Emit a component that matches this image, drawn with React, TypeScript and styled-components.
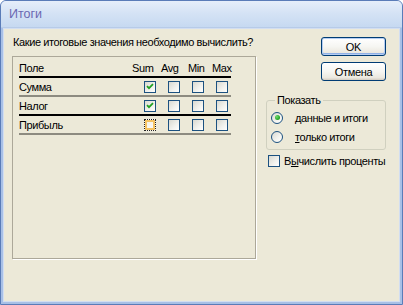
import React from "react";
import styled, { createGlobalStyle, css } from "styled-components";

const Global = createGlobalStyle`
  html, body { margin: 0; padding: 0; background: #fff; }
  body { font-family: "Liberation Sans", Arial, sans-serif; font-size: 11px; color: #000; letter-spacing: -0.4px; }
  * { box-sizing: border-box; }
`;

const Window = styled.div`
  width: 403px;
  height: 305px;
  display: flex;
  flex-direction: column;
  border: 1px solid #5a7cb8;
  border-radius: 6px 6px 0 0;
  background: #a8c0e6;
  overflow: hidden;
`;

const TitleBar = styled.div`
  height: 27px;
  flex: none;
  display: flex;
  align-items: center;
  padding-left: 8px;
  background: linear-gradient(#e6eefa 0%, #d5e3f5 45%, #c6d9f1 100%);
  border-bottom: 1px solid #b7cbe8;
  color: #6a68b2;
  font-size: 12.5px;
  letter-spacing: 0;
`;

const Client = styled.div`
  flex: 1;
  display: flex;
  gap: 10px;
  margin: 0 2px 2px 2px;
  border: 1px solid #d2def1;
  background: #ece9d8;
  padding: 6px 11px 0 8px;
`;

const LeftCol = styled.div`
  width: 244px;
  display: flex;
  flex-direction: column;
`;

const Prompt = styled.div`
  line-height: 14px;
  padding-left: 1px;
  white-space: nowrap;
`;

const ListFrame = styled.div`
  margin-top: 7px;
  height: 203px;
  border: 1px solid #aca899;
  box-shadow: 1px 1px 0 #fff;
  padding: 0 24px 0 6px;
  display: flex;
  flex-direction: column;
`;

const HeaderRow = styled.div`
  height: 21px;
  display: flex;
  align-items: flex-end;
  padding-bottom: 1px;
  border-bottom: 2px solid #000;
  line-height: 14px;
`;

const HeaderCell = styled.div<{ $w: number }>`
  width: ${(p) => p.$w}px;
  flex: none;
  white-space: nowrap;
`;

const Row = styled.div<{ $dark?: boolean }>`
  height: 19px;
  display: grid;
  grid-template-columns: 119px 24px 24px 24px 21px;
  align-items: center;
  border-bottom: 2px solid ${(p) => (p.$dark ? "#000" : "#8d8b80")};
  line-height: 14px;
`;

const NameCell = styled.div`
  white-space: nowrap;
`;

const BoxCell = styled.div<{ $last?: boolean }>`
  display: flex;
  justify-content: ${(p) => (p.$last ? "flex-start" : "center")};
  padding-left: ${(p) => (p.$last ? 6 : 0)}px;
`;

const Box = styled.span<{ $focus?: boolean }>`
  width: 12px;
  height: 12px;
  flex: none;
  display: inline-flex;
  align-items: center;
  justify-content: center;
  border: 1px solid #1c5180;
  background: linear-gradient(135deg, #d9d9d1 0%, #f2f2ee 60%, #ffffff 100%);
  ${(p) =>
    p.$focus &&
    css`
      border: 1px dotted #222;
      box-shadow: inset 0 0 0 2px #f6c462;
      background: linear-gradient(135deg, #f3f0e4 0%, #fdfcf8 100%);
    `}
`;

const Check = () => (
  <svg width="8" height="7" viewBox="0 0 8 7">
    <path d="M1 3.2 L3 5.2 L7 1.2" fill="none" stroke="#21a121" strokeWidth="1.8" />
  </svg>
);

const CheckBox: React.FC<{ checked?: boolean; focus?: boolean }> = ({ checked, focus }) => (
  <Box $focus={focus}>{checked && <Check />}</Box>
);

const RightCol = styled.div`
  width: 120px;
  display: flex;
  flex-direction: column;
`;

const Button = styled.button<{ $default?: boolean }>`
  align-self: flex-end;
  width: 65px;
  height: 19px;
  margin-top: ${(p) => (p.$default ? 2 : 6)}px;
  padding: 0;
  font-family: "Liberation Sans", Arial, sans-serif;
  font-size: 11px;
  letter-spacing: -0.3px;
  color: #000;
  border: 1px solid #003c74;
  border-radius: 3px;
  background: linear-gradient(#ffffff 0%, #f6f6f2 50%, #ece9e0 85%, #d6d0c5 100%);
  box-shadow: ${(p) =>
    p.$default ? "inset 0 0 0 1px #b5cdf2, inset 0 -1px 0 1px #8fb0e6" : "inset 0 -1px 0 #d8d2c7"};
`;

const Group = styled.fieldset`
  margin: 12px 0 0 0;
  padding: 1px 0 3px 4px;
  border: 1px solid #d0d0bf;
  border-radius: 3px;
  min-inline-size: 0;
`;

const Legend = styled.legend`
  margin-left: 4px;
  padding: 0 2px;
  line-height: 14px;
`;

const RadioRow = styled.div`
  height: 19px;
  display: flex;
  align-items: center;
  gap: 12px;
  white-space: nowrap;
`;

const Radio = styled.span<{ $on?: boolean }>`
  width: 12px;
  height: 12px;
  flex: none;
  border-radius: 50%;
  border: 1px solid #1c5180;
  background: linear-gradient(135deg, #d9d9d1 0%, #f4f4f0 60%, #ffffff 100%);
  display: flex;
  align-items: center;
  justify-content: center;
  &::after {
    content: "";
    display: ${(p) => (p.$on ? "block" : "none")};
    width: 5px;
    height: 5px;
    border-radius: 50%;
    background: radial-gradient(circle at 35% 35%, #6fdb6f 0%, #21a121 70%);
  }
`;

const Key = styled.span`
  text-decoration: underline;
`;

const CheckRow = styled.div`
  margin-top: 4px;
  padding-left: 2px;
  height: 14px;
  display: flex;
  align-items: center;
  gap: 4px;
  line-height: 14px;
  white-space: nowrap;
`;

const rows = [
  { name: "Сумма", sum: true, dark: false },
  { name: "Налог", sum: true, dark: true },
  { name: "Прибыль", sum: false, dark: false, focus: true },
];

export default function App() {
  return (
    <>
      <Global />
      <Window>
        <TitleBar>Итоги</TitleBar>
        <Client>
          <LeftCol>
            <Prompt>Какие итоговые значения необходимо вычислить?</Prompt>
            <ListFrame>
              <HeaderRow>
                <HeaderCell $w={113}>Поле</HeaderCell>
                <HeaderCell $w={29}>Sum</HeaderCell>
                <HeaderCell $w={27}>Avg</HeaderCell>
                <HeaderCell $w={24}>Min</HeaderCell>
                <HeaderCell $w={19}>Max</HeaderCell>
              </HeaderRow>
              {rows.map((r) => (
                <Row key={r.name} $dark={r.dark}>
                  <NameCell>{r.name}</NameCell>
                  <BoxCell>
                    <CheckBox checked={r.sum} focus={r.focus} />
                  </BoxCell>
                  <BoxCell>
                    <CheckBox />
                  </BoxCell>
                  <BoxCell>
                    <CheckBox />
                  </BoxCell>
                  <BoxCell $last>
                    <CheckBox />
                  </BoxCell>
                </Row>
              ))}
            </ListFrame>
          </LeftCol>
          <RightCol>
            <Button $default>OK</Button>
            <Button>Отмена</Button>
            <Group>
              <Legend>Показать</Legend>
              <RadioRow>
                <Radio $on />
                <span>
                  <Key>д</Key>анные и итоги
                </span>
              </RadioRow>
              <RadioRow>
                <Radio />
                <span>
                  <Key>т</Key>олько итоги
                </span>
              </RadioRow>
            </Group>
            <CheckRow>
              <CheckBox />
              <span>
                В<Key>ы</Key>числить проценты
              </span>
            </CheckRow>
          </RightCol>
        </Client>
      </Window>
    </>
  );
}
